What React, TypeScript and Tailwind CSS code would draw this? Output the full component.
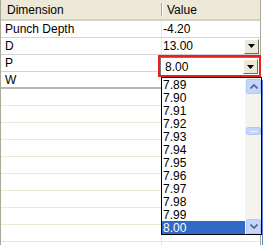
import React from "react";

const rows = [
  { name: "Punch Depth", value: "-4.20" },
  { name: "D", value: "13.00" },
  { name: "P", value: "8.00" },
  { name: "W", value: "" },
];

const items = ["7.89", "7.90", "7.91", "7.92", "7.93", "7.94", "7.95", "7.96", "7.97", "7.98", "7.99", "8.00"];

function ComboButton() {
  return (
    <div className="flex h-[15px] w-[15px] items-center justify-center border border-t-white border-l-white border-r-[#716f64] border-b-[#716f64] bg-[#ece9d8]">
      <svg width="7" height="4" viewBox="0 0 7 4">
        <path d="M0 0h7L3.5 4z" fill="#000" />
      </svg>
    </div>
  );
}

function ScrollArrow({ up }: { up?: boolean }) {
  return (
    <div className="flex h-[15px] w-[15px] items-center justify-center rounded-[2px] border border-[#b4c8f6] bg-[#c6d6fb]">
      <svg width="8" height="5" viewBox="0 0 8 5">
        <path d={up ? "M0.5 4.5L4 1l3.5 3.5" : "M0.5 0.5L4 4l3.5-3.5"} fill="none" stroke="#4d6185" strokeWidth="1.6" />
      </svg>
    </div>
  );
}

export default function App() {
  return (
    <div className="relative h-[245px] w-[263px] overflow-hidden bg-white text-[12px] text-black" style={{ fontFamily: '"Liberation Sans", Arial, sans-serif' }}>
      <div className="h-full w-[261px] border-l border-r border-[#aca899]">
        <div className="flex h-[21px] border-b-2 border-[#d6d2c2] bg-[#ece9d8]">
          <div className="flex w-[160px] items-center pl-[6px]">Dimension</div>
          <div className="my-[3px] w-px bg-[#aca899]" />
          <div className="my-[3px] w-px bg-white" />
          <div className="flex flex-1 items-center pl-[4px]">Value</div>
        </div>
        {rows.map((r, i) => (
          <div key={r.name} className={`flex h-[17px] ${i === rows.length - 1 ? "border-b-2 border-[#b8b8b0]" : "border-b border-[#d4d4d4]"}`}>
            <div className="flex w-[160px] items-center pl-[4px] leading-none">{r.name}</div>
            <div className="w-px bg-[#ece9d8]" />
            <div className="flex flex-1 items-center justify-between pl-[1px] pr-[1px] leading-none">
              <span>{r.name === "P" ? "" : r.value}</span>
              {r.name === "D" && <ComboButton />}
            </div>
          </div>
        ))}
        {Array.from({ length: 10 }).map((_, i) => (
          <div key={i} className="flex h-[17px] border-b border-[#ebe8d7]">
            <div className="w-[160px]" />
            <div className="w-px bg-[#ebe8d7]" />
          </div>
        ))}
      </div>

      {/* editing combo */}
      <div className="absolute left-[158px] top-[55px] h-[22px] w-[103px] border-2 border-[#e8211f] bg-white">
        <div className="flex h-full items-center justify-between border-l border-t border-[#7a7a7a] pl-[4px] pr-[1px]">
          <span className="leading-none">8.00</span>
          <ComboButton />
        </div>
      </div>

      {/* dropdown list */}
      <div className="absolute left-[161px] top-[77px] flex h-[158px] w-[101px] border border-black bg-white">
        <div className="flex-1">
          {items.map((it) => (
            <div key={it} className={`flex h-[13px] items-center pl-[1px] leading-none ${it === "8.00" ? "bg-[#316ac5] text-white" : ""}`}>
              {it}
            </div>
          ))}
        </div>
        <div className="flex w-[16px] flex-col bg-[#f4f3ee] pt-[1px] pl-[1px]">
          <ScrollArrow up />
          <div className="flex-1 pt-[33px]">
            <div className="flex h-[8px] w-[15px] flex-col items-center justify-center gap-px rounded-[2px] border border-[#b4c8f6] bg-[#c6d6fb]">
              <div className="h-px w-[7px] bg-[#eef3fe]" />
            </div>
          </div>
          <ScrollArrow />
        </div>
      </div>
      <div className="absolute right-0 top-[80px] h-[165px] w-px bg-[#5b82d8]" />
    </div>
  );
}
